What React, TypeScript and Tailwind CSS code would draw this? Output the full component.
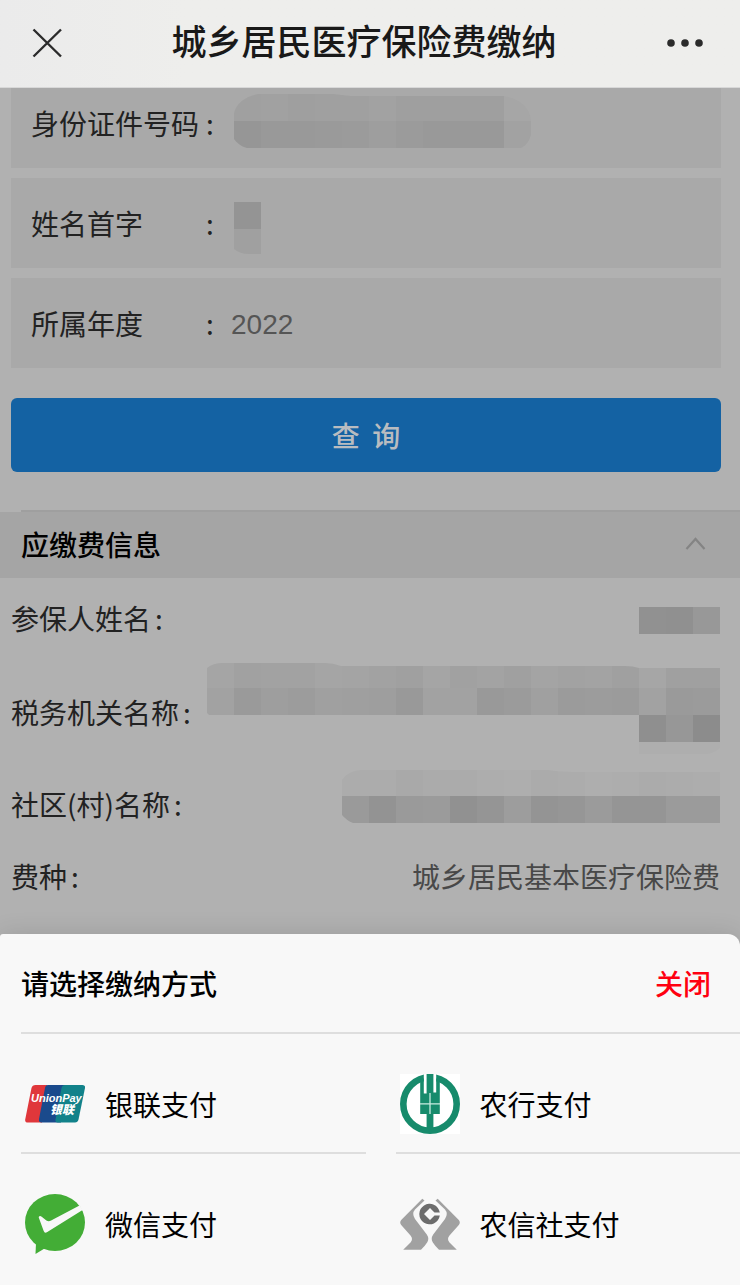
import React, { useId } from 'react';

type MosaicProps = {
  width: number;
  height: number;
  clip: string;
  rows: { x: number; y: number; h: number; fills: string[] }[];
};

const CELL = 27;

function Mosaic({ width, height, clip, rows }: MosaicProps) {
  const id = useId();
  return (
    <svg width={width} height={height} aria-hidden="true" className="shrink-0" shapeRendering="crispEdges">
      <clipPath id={id}>
        <path d={clip} />
      </clipPath>
      <g clipPath={`url(#${id})`}>
        {rows.map((row) =>
          row.fills.map((fill, i) => (
            <rect key={`${row.y}-${i}`} x={row.x + i * CELL} y={row.y} width={CELL} height={row.h} fill={`#${fill}`} />
          )),
        )}
      </g>
    </svg>
  );
}

function Field({ label, htmlFor, children }: { label: string; htmlFor?: string; children: React.ReactNode }) {
  return (
    <div className="flex h-[90px] items-center bg-[#a9a9a9] pl-5">
      <label htmlFor={htmlFor} className="flex w-[200px] shrink-0 items-center text-[#222]">
        <span className="w-[175px]">{label}</span>
        <span>:</span>
      </label>
      {children}
    </div>
  );
}

function Term({ children }: { children: React.ReactNode }) {
  return (
    <dt className="flex shrink-0 gap-1">
      <span>{children}</span>
      <span>:</span>
    </dt>
  );
}

function UnionPayLogo() {
  return (
    <svg width="60" height="60" viewBox="0 0 60 60" aria-hidden="true">
      <path d="M10.500 11h12L17 48.500H3Q-.5 48.500.3 45L6.500 14Q7.300 11 10.500 11Z" fill="#e0373b" />
      <path d="M23 11h19L36 48.500H16.500Q13.500 48.500 14 45L20 14Q20.500 11 23 11Z" fill="#1a4a8c" />
      <path d="M40 11h17.500Q60.500 11 60 14L53.500 45.500Q52.800 48.500 50 48.500H32.500Q30 48.500 30.500 45.500L36.500 14Q37.200 11 40 11Z" fill="#12828a" />
      <text x="6" y="28" fill="#fff" fontFamily="Liberation Sans, sans-serif" fontSize="11" fontWeight="700" fontStyle="italic">UnionPay</text>
      <text x="25" y="40" fill="#fff" fontFamily="Liberation Sans, Noto Sans CJK SC, sans-serif" fontSize="12" fontWeight="900" fontStyle="italic">银联</text>
    </svg>
  );
}

function AgriBankLogo() {
  return (
    <svg width="60" height="60" viewBox="0 0 60 60" aria-hidden="true">
      <path d="M0 0h60v60H0z" fill="#fff" />
      <circle cx="30" cy="30" r="26.700" fill="none" stroke="#178b6c" strokeWidth="6.600" />
      <path d="M23.800 0h12.400v19H23.800z" fill="#fff" />
      <path d="M26.600 0h6.800v18.500h2.800V4.500h3.600V40h-6.400v15h-6.800V40h-6.400V4.500h3.600v15h2.800z" fill="#178b6c" />
      <path d="M30 19v21M20 29.800h20" stroke="#c9ebe0" strokeWidth="1.300" />
    </svg>
  );
}

function WeChatPayLogo() {
  return (
    <svg width="60" height="60" viewBox="0 0 60 60" aria-hidden="true">
      <ellipse cx="30" cy="28.500" rx="30" ry="28.500" fill="#43ad36" />
      <path d="M11 49l-.5 11 9-5.500z" fill="#43ad36" />
      <path d="M14 22.500c.8-1 1.700-.6 2.700.3l4.700 3.600c1.500 1.100 3 1 4.700.2L54.500 11.500l3.500 4.300L22.300 38c-2 1.200-2.800.8-3.700-1.200l-4.500-12.200c-.3-.9-.5-1.500-.1-2.100z" fill="#f8f8f8" />
    </svg>
  );
}

function RuralCreditLogo() {
  const hand =
    'M22.300 4.700L1.200 26Q-.8 28.300 1.200 31L10.500 41.500Q13.500 45 10.500 48.500L3.200 55.800H21Q24.500 52.500 27.300 48.200Q29.500 44.500 26.800 40.500L15 25Q11.500 19.500 15 15.500L24.500 6.500Z';
  return (
    <svg width="60" height="60" viewBox="0 0 60 60" aria-hidden="true">
      <path d={hand} fill="#a1a1a1" />
      <path d={hand} fill="#a1a1a1" transform="matrix(-1 0 0 1 60 0)" />
      <path
        fillRule="evenodd"
        d="M39.800 18.600A10.300 10.300 0 1 0 39.800 21.500H34.500L30 26L24 20L30 14L34.500 18.600Z"
        fill="#6c6c6c"
      />
    </svg>
  );
}

const methods = [
  { name: '银联支付', Logo: UnionPayLogo },
  { name: '农行支付', Logo: AgriBankLogo },
  { name: '微信支付', Logo: WeChatPayLogo },
  { name: '农信社支付', Logo: RuralCreditLogo },
];

export default function App() {
  return (
    <div className="flex min-h-screen flex-col bg-[#b1b1b1] font-['Noto_Sans_CJK_SC','Liberation_Sans',sans-serif] text-[28px] leading-10">
      <header className="relative z-10 flex h-[88px] items-center justify-between border-b border-[#d8d8d8] bg-linear-to-r from-[#ebebeb] to-[#eeeeec] to-25% pr-9 pb-0.5 pl-8">
        <button type="button" aria-label="关闭页面">
          <svg width="30" height="30" viewBox="0 0 30 30" fill="none" stroke="#2b2b2b" strokeWidth="2.400">
            <path d="M1.500 1.500l27.500 27M29 1.500l-27.500 27" />
          </svg>
        </button>
        <h1 className="font-['Liberation_Sans','Noto_Sans_CJK_SC',sans-serif] text-[35px] font-medium text-[#191919]">城乡居民医疗保险费缴纳</h1>
        <button type="button" aria-label="更多">
          <svg width="38" height="10" viewBox="0 0 38 10" fill="#2b2b2b">
            <circle cx="5" cy="5" r="3.800" />
            <circle cx="19" cy="5" r="3.800" />
            <circle cx="33" cy="5" r="3.800" />
          </svg>
        </button>
      </header>

      <main className="-mt-2.5 pb-6">
        <form className="flex flex-col gap-2.5 pr-[19px] pl-[11px]" onSubmit={(e) => e.preventDefault()}>
          <Field label="身份证件号码">
            <Mosaic
              width={300}
              height={90}
              clip="M3 35Q7 20 27 16H102Q110 17 120 18H272Q297 22 300 42V57Q297 67 290 70H16Q8 68 3 61Z"
              rows={[
                { x: 3, y: 16, h: 27, fills: ['a0a0a0', 'a1a1a1', '9f9f9f', 'a0a0a0', 'a0a0a0', 'a2a2a2', '9f9f9f', '9f9f9f', '9f9f9f', '9f9f9f', 'a6a6a6'] },
                { x: 3, y: 43, h: 27, fills: ['969696', '999999', '999999', '9a9a9a', '9b9b9b', '9e9e9e', '9b9b9b', '999999', '999999', '999999', 'a2a2a2'] },
              ]}
            />
          </Field>
          <Field label="姓名首字">
            <Mosaic
              width={60}
              height={90}
              clip="M3 24H30V76H18Q9 76 3 71Z"
              rows={[
                { x: 3, y: 24, h: 27, fills: ['949494'] },
                { x: 3, y: 51, h: 27, fills: ['a0a0a0'] },
              ]}
            />
          </Field>
          <Field label="所属年度" htmlFor="year">
            <input id="year" defaultValue="2022" className="min-w-0 flex-1 bg-transparent pt-1 font-['Liberation_Sans',sans-serif] text-[#555] outline-none" />
          </Field>
          <button type="submit" className="mt-5 h-[74px] rounded-md bg-[#1462a3] font-medium whitespace-pre text-[#b9bcc0]">
            查&nbsp; 询
          </button>
        </form>

        <section className="mt-[38px]">
          <div className="ml-[21px] h-0.5 bg-[#9f9f9f]" />
          <h2>
            <button type="button" className="flex h-[66px] w-full items-center justify-between bg-[#a5a5a5] pr-[34px] pb-0.5 pl-[21px] font-medium text-black">
              应缴费信息
              <svg width="21" height="14" viewBox="0 0 21 14" fill="none" stroke="#848484" strokeWidth="2.200">
                <path d="M1.500 12l9-10 9 10" />
              </svg>
            </button>
          </h2>
          <dl className="pr-5 pl-[11px] text-[#222]">
            <div className="flex h-20 items-center justify-between">
              <Term>参保人姓名</Term>
              <dd>
                <Mosaic width={81} height={80} clip="M0 0H81V80H0Z" rows={[{ x: 0, y: 29, h: 27, fills: ['919191', '909090', '989898'] }]} />
              </dd>
            </div>
            <div className="flex h-[108px] items-center justify-between">
              <Term>税务机关名称</Term>
              <dd className="flex min-w-0 justify-end overflow-hidden">
                <Mosaic
                  width={513}
                  height={108}
                  clip="M0 10Q6 5 16 5H118Q126 5 134 8H418Q426 8 432 10H513V90Q506 96 498 96H432V57H2L0 55Z"
                  rows={[
                    { x: 0, y: 5, h: 25, fills: ['a5a5a5', 'a1a1a1', 'a2a2a2', 'a2a2a2', 'a5a5a5', 'a4a4a4', 'a2a2a2', 'a0a0a0', 'a5a5a5', 'a1a1a1', 'a3a3a3', 'a0a0a0', 'a4a4a4', 'a2a2a2', 'a3a3a3', 'a0a0a0', 'a6a6a6', 'a0a0a0', 'a0a0a0'] },
                    { x: 0, y: 30, h: 27, fills: ['a2a2a2', '9a9a9a', '9e9e9e', '9c9c9c', 'a0a0a0', '9f9f9f', '9e9e9e', '999999', 'a2a2a2', 'a2a2a2', '999999', '9b9b9b', 'a0a0a0', '9b9b9b', '9c9c9c', '9b9b9b', 'a2a2a2', '9a9a9a', '9b9b9b'] },
                    { x: 432, y: 57, h: 27, fills: ['8f8f8f', '979797', '8c8c8c'] },
                    { x: 432, y: 84, h: 12, fills: ['aeaeae', 'aeaeae', 'aeaeae'] },
                  ]}
                />
              </dd>
            </div>
            <div className="flex h-[76px] items-center justify-between">
              <Term>社区(村)名称</Term>
              <dd className="flex min-w-0 justify-end overflow-hidden">
                <Mosaic
                  width={378}
                  height={76}
                  clip="M0 14Q7 4 20 4H205Q218 6 230 6H378V57H11Q4 54 0 49Z"
                  rows={[
                    { x: 0, y: 4, h: 26, fills: ['acacac', 'acacac', 'a9a9a9', 'ababab', 'ababab', 'adadad', 'aeaeae', 'ababab', 'acacac', 'aeaeae', 'adadad', 'ababab', 'acacac', 'adadad'] },
                    { x: 0, y: 30, h: 27, fills: ['9a9a9a', '939393', '9a9a9a', '9b9b9b', '919191', '959595', '9d9d9d', '949494', '969696', '9b9b9b', '959595', '959595', '9b9b9b', '9b9b9b'] },
                  ]}
                />
              </dd>
            </div>
            <div className="flex h-[68px] items-center justify-between">
              <Term>费种</Term>
              <dd className="text-[#484848]">城乡居民基本医疗保险费</dd>
            </div>
          </dl>
        </section>
      </main>

      <section role="dialog" aria-labelledby="sheet-title" className="flex-1 rounded-tl-[3px] rounded-tr-xl bg-[#f8f8f8] pb-[30px] pl-[21px] shadow-[0_0_24px_rgba(0,0,0,0.12)]">
        <div className="flex h-[100px] items-center justify-between border-b-2 border-[#dedede] pr-[29px]">
          <h2 id="sheet-title" className="font-medium text-black">请选择缴纳方式</h2>
          <button type="button" className="font-medium text-[#ff0010]">关闭</button>
        </div>
        <ul className="grid grid-cols-2 gap-x-[30px]">
          {methods.map(({ name, Logo }, i) => (
            <li key={name} className={i < 2 ? 'border-b-2 border-[#dedede] pt-10 pb-[18px]' : 'pt-10'}>
              <button type="button" className="flex w-full items-center gap-5 pl-1 text-black">
                <Logo />
                {name}
              </button>
            </li>
          ))}
        </ul>
      </section>
    </div>
  );
}
